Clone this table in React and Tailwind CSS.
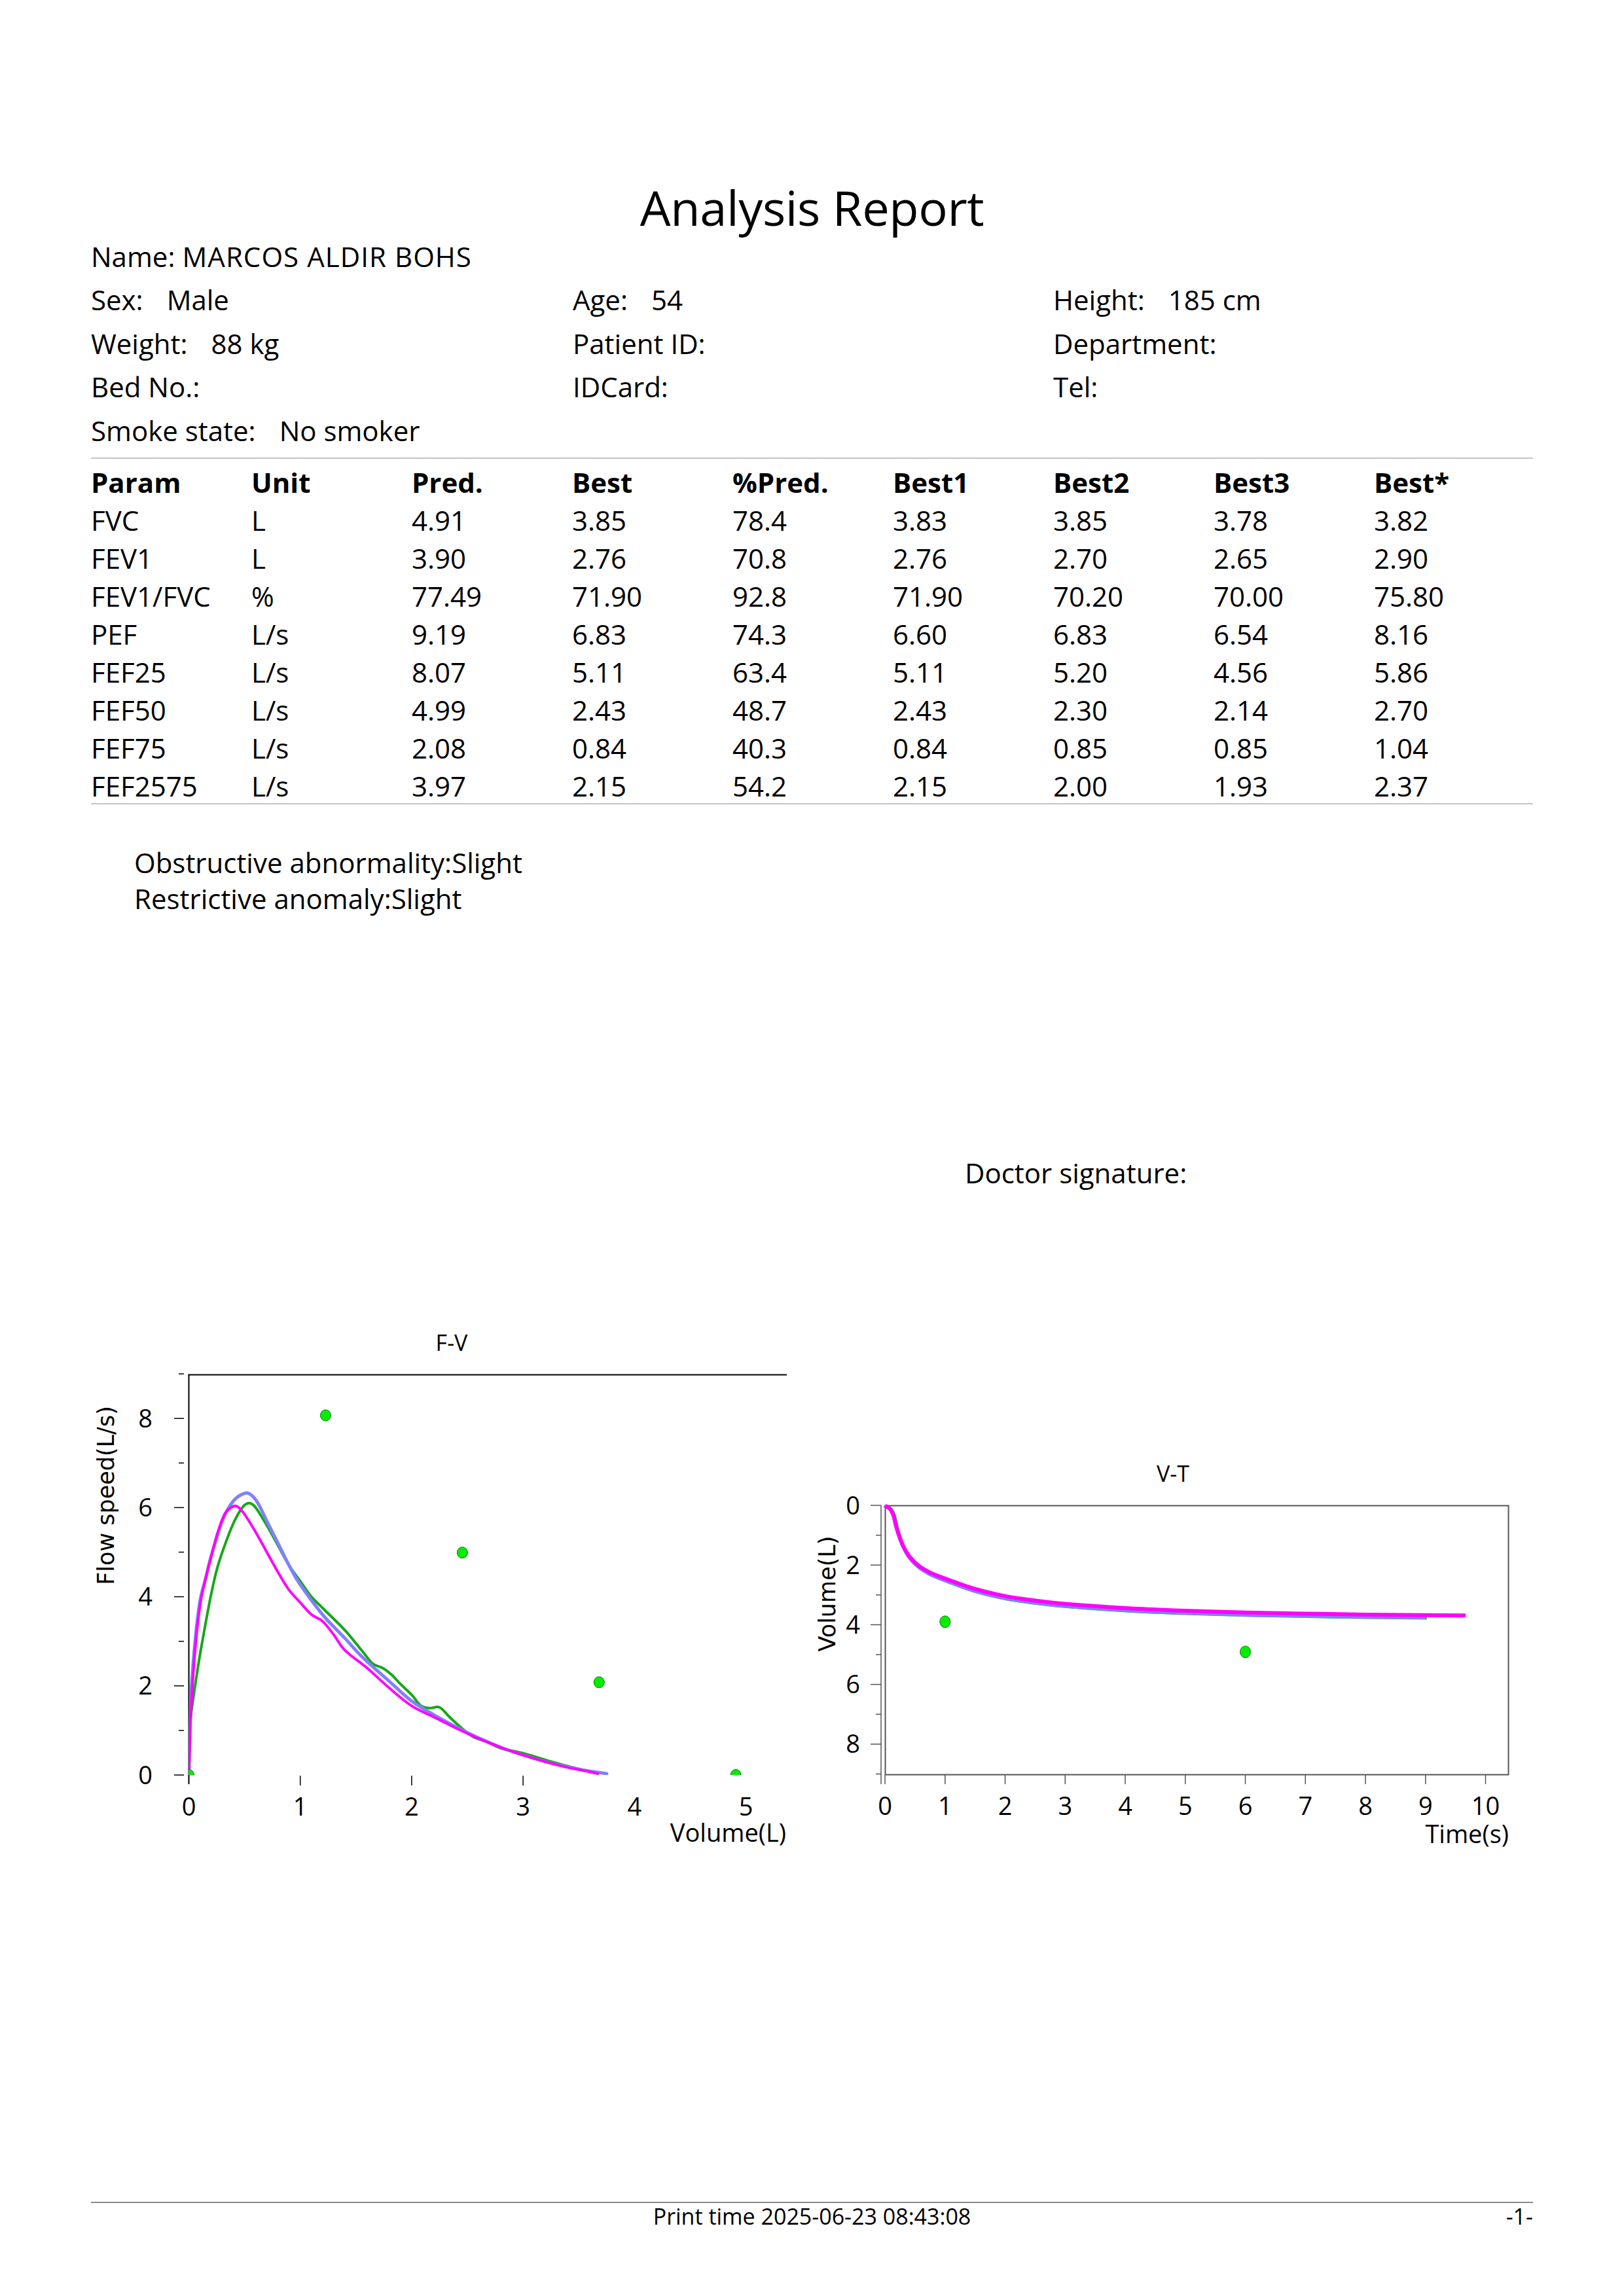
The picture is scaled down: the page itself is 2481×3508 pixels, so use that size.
import React from 'react';

const info = [
  [['Name:', 'MARCOS ALDIR BOHS', true], null, null],
  [['Sex:', 'Male'], ['Age:', '54'], ['Height:', '185 cm']],
  [['Weight:', '88 kg'], ['Patient ID:', ''], ['Department:', '']],
  [['Bed No.:', ''], ['IDCard:', ''], ['Tel:', '']],
  [['Smoke state:', 'No smoker'], null, null],
];

const head = ['Param', 'Unit', 'Pred.', 'Best', '%Pred.', 'Best1', 'Best2', 'Best3', 'Best*'];
const rows = [
  ['FVC', 'L', '4.91', '3.85', '78.4', '3.83', '3.85', '3.78', '3.82'],
  ['FEV1', 'L', '3.90', '2.76', '70.8', '2.76', '2.70', '2.65', '2.90'],
  ['FEV1/FVC', '%', '77.49', '71.90', '92.8', '71.90', '70.20', '70.00', '75.80'],
  ['PEF', 'L/s', '9.19', '6.83', '74.3', '6.60', '6.83', '6.54', '8.16'],
  ['FEF25', 'L/s', '8.07', '5.11', '63.4', '5.11', '5.20', '4.56', '5.86'],
  ['FEF50', 'L/s', '4.99', '2.43', '48.7', '2.43', '2.30', '2.14', '2.70'],
  ['FEF75', 'L/s', '2.08', '0.84', '40.3', '0.84', '0.85', '0.85', '1.04'],
  ['FEF2575', 'L/s', '3.97', '2.15', '54.2', '2.15', '2.00', '1.93', '2.37'],
];

// smooth path through points (catmull-rom -> bezier)
function smooth(pts) {
  let d = `M${pts[0][0].toFixed(1)},${pts[0][1].toFixed(1)}`;
  for (let i = 0; i < pts.length - 1; i++) {
    const p0 = pts[i - 1] || pts[i];
    const p1 = pts[i];
    const p2 = pts[i + 1];
    const p3 = pts[i + 2] || p2;
    const c1x = p1[0] + (p2[0] - p0[0]) / 6;
    const c1y = p1[1] + (p2[1] - p0[1]) / 6;
    const c2x = p2[0] - (p3[0] - p1[0]) / 6;
    const c2y = p2[1] - (p3[1] - p1[1]) / 6;
    d += ` C${c1x.toFixed(1)},${c1y.toFixed(1)} ${c2x.toFixed(1)},${c2y.toFixed(1)} ${p2[0].toFixed(1)},${p2[1].toFixed(1)}`;
  }
  return d;
}

const FONT = 'Open Sans, Noto Sans, sans-serif';
const LABEL_FONT = 'DejaVu Sans, Verdana, sans-serif';

// F-V
const fx = (v) => 288.5 + 170.2 * v;
const fy = (f) => 2713 - 68.1 * f;

const fvMagenta = [[0, 0], [0.02, 1.5], [0.06, 2.9], [0.1, 3.8], [0.14, 4.3], [0.2, 4.9], [0.26, 5.45], [0.32, 5.85], [0.38, 6.0], [0.43, 6.03], [0.5, 5.85], [0.6, 5.45], [0.7, 5.0], [0.8, 4.55], [0.9, 4.15], [1.0, 3.87], [1.1, 3.6], [1.2, 3.45], [1.3, 3.15], [1.4, 2.8], [1.6, 2.4], [1.8, 1.95], [2.0, 1.55], [2.2, 1.3], [2.4, 1.05], [2.6, 0.82], [2.8, 0.62], [3.0, 0.45], [3.2, 0.3], [3.4, 0.17], [3.6, 0.07], [3.67, 0.03]];
const fvBlue = [[0, 0], [0.02, 1.8], [0.06, 3.1], [0.1, 3.9], [0.15, 4.4], [0.2, 4.9], [0.3, 5.7], [0.4, 6.15], [0.5, 6.32], [0.56, 6.28], [0.62, 6.1], [0.7, 5.7], [0.8, 5.2], [0.9, 4.7], [1.0, 4.27], [1.2, 3.6], [1.4, 3.07], [1.56, 2.64], [1.8, 2.1], [2.0, 1.66], [2.2, 1.35], [2.5, 0.95], [2.8, 0.62], [3.0, 0.45], [3.2, 0.3], [3.5, 0.13], [3.75, 0.03]];
const fvGreen = [[0, 0], [0.01, 1.1], [0.05, 1.9], [0.1, 2.7], [0.15, 3.4], [0.2, 4.05], [0.25, 4.6], [0.31, 5.07], [0.4, 5.65], [0.48, 6.0], [0.54, 6.1], [0.6, 6.0], [0.7, 5.6], [0.8, 5.15], [0.9, 4.7], [1.0, 4.35], [1.1, 4.0], [1.22, 3.7], [1.4, 3.25], [1.55, 2.8], [1.65, 2.5], [1.74, 2.4], [1.82, 2.25], [1.9, 2.04], [2.0, 1.8], [2.08, 1.56], [2.16, 1.5], [2.25, 1.52], [2.34, 1.3], [2.45, 1.05], [2.55, 0.86], [2.68, 0.74], [2.8, 0.6], [3.0, 0.49], [3.2, 0.34], [3.4, 0.2], [3.55, 0.11], [3.68, 0.04]];
const fvDots = [[0, 0], [1.2275, 8.07], [2.455, 4.99], [3.6825, 2.08], [4.91, 0]];

// V-T
const tx = (t) => 1352 + 91.75 * t;
const ty = (v) => 2301 + 45.6 * v;

const vtBase = [[0, 0], [0.015, 0.03], [0.087, 0.125], [0.142, 0.34], [0.178, 0.64], [0.232, 1.0], [0.305, 1.37], [0.414, 1.73], [0.56, 2.02], [0.75, 2.25], [1.0, 2.45], [1.5, 2.8], [2.0, 3.04], [2.5, 3.19], [3, 3.3], [4, 3.44], [5, 3.53], [6, 3.59], [7, 3.63], [8, 3.66], [9, 3.68], [9.67, 3.69]];
const vtMagenta = vtBase;
const vtBlue = vtBase.filter((p) => p[0] <= 9.3).map(([t, v]) => [t, v + Math.min(0.08, v * 0.03)]);
const vtGreen = vtBase.filter((p) => p[0] <= 9.35).map(([t, v]) => [t + 0.02, v + Math.min(0.1, v * 0.035)]);
const vtDots = [[1, 3.9], [6, 4.91]];

function toPts(data, mx, my) {
  return data.map(([a, b]) => [mx(a), my(b)]);
}

function FVChart() {
  return (
    <svg width="1120" height="850" viewBox="100 2000 1120 850" className="block shrink-0">
      <defs>
        <clipPath id="fvclip">
          <rect x="288.5" y="2100" width="914" height="613" />
        </clipPath>
      </defs>
      <text x="690" y="2065" textAnchor="middle" fontFamily={FONT} fontSize="34">F-V</text>
      <line x1="287.5" y1="2101.5" x2="1202" y2="2101.5" stroke="#000" strokeWidth="2" />
      <line x1="288.5" y1="2101" x2="288.5" y2="2727" stroke="#000" strokeWidth="2" />
      {[0, 1, 2, 3, 4, 5, 6, 7, 8, 9].map((n) => (
        <line key={n} x1={n % 2 === 0 ? 266 : 273} y1={fy(n)} x2="281" y2={fy(n)} stroke="#000" strokeWidth="1.5" />
      ))}
      {[0, 2, 4, 6, 8].map((n) => (
        <text key={n} x="233" y={fy(n) + 13.5} textAnchor="end" fontFamily={FONT} fontSize="38">{n}</text>
      ))}
      {[1, 2, 3].map((n) => (
        <line key={n} x1={fx(n)} y1="2714" x2={fx(n)} y2="2729" stroke="#000" strokeWidth="1.5" />
      ))}
      {[0, 1, 2, 3, 4, 5].map((n) => (
        <text key={n} x={fx(n)} y="2775" textAnchor="middle" fontFamily={FONT} fontSize="38">{n}</text>
      ))}
      <text x="1201" y="2815" textAnchor="end" fontFamily={FONT} fontSize="38">Volume(L)</text>
      <text x="174" y="2286" textAnchor="middle" fontFamily={LABEL_FONT} fontSize="35" transform="rotate(-90 174 2286)">Flow speed(L/s)</text>
      <g clipPath="url(#fvclip)" fill="none" strokeLinejoin="round" strokeLinecap="round">
        <path d={smooth(toPts(fvGreen, fx, fy))} stroke="#16a816" strokeWidth="4" />
        <path d={smooth(toPts(fvBlue, fx, fy))} stroke="#8080ff" strokeWidth="5" />
        <path d={smooth(toPts(fvMagenta, fx, fy))} stroke="#ff00ff" strokeWidth="4" />
        {fvDots.map(([v, f], i) => (
          <ellipse key={i} cx={fx(v)} cy={fy(f)} rx="8" ry="8.5" fill="#00ee00" stroke="#0a7a0a" strokeWidth="1" />
        ))}
      </g>
    </svg>
  );
}

function VTChart() {
  return (
    <svg width="1120" height="850" viewBox="1220 2000 1120 850" className="block shrink-0">
      <text x="1792" y="2265" textAnchor="middle" fontFamily={FONT} fontSize="34">V-T</text>
      <rect x="1352.5" y="2301.5" width="952" height="411" fill="none" stroke="#555" strokeWidth="2" />
      <line x1="1346" y1="2301" x2="1346" y2="2727" stroke="#555" strokeWidth="1.5" />
      {[0, 1, 2, 3, 4, 5, 6, 7, 8, 9].map((n) => (
        <line key={n} x1={n % 2 === 0 ? 1330 : 1338} y1={ty(n)} x2="1346" y2={ty(n)} stroke="#555" strokeWidth="1.5" />
      ))}
      {[0, 2, 4, 6, 8].map((n) => (
        <text key={n} x="1314" y={ty(n) + 13.5} textAnchor="end" fontFamily={FONT} fontSize="38">{n}</text>
      ))}
      {[0, 1, 2, 3, 4, 5, 6, 7, 8, 9, 10].map((n) => (
        <line key={n} x1={tx(n)} y1="2713" x2={tx(n)} y2="2727" stroke="#555" strokeWidth="1.5" />
      ))}
      {[0, 1, 2, 3, 4, 5, 6, 7, 8, 9, 10].map((n) => (
        <text key={n} x={tx(n)} y="2774" textAnchor="middle" fontFamily={FONT} fontSize="38">{n}</text>
      ))}
      <text x="2305" y="2817" textAnchor="end" fontFamily={FONT} fontSize="38">Time(s)</text>
      <text x="1276" y="2436" textAnchor="middle" fontFamily={LABEL_FONT} fontSize="35" transform="rotate(-90 1276 2436)">Volume(L)</text>
      <g fill="none" strokeLinejoin="round" strokeLinecap="butt">
        <path d={smooth(toPts(vtGreen, tx, ty))} stroke="#16a816" strokeWidth="4" />
        <path d={smooth(toPts(vtBlue, tx, ty))} stroke="#8080ff" strokeWidth="5" />
        <path d={smooth(toPts(vtMagenta, tx, ty))} stroke="#ff00ff" strokeWidth="6" />
      </g>
      {vtDots.map(([t, v], i) => (
        <ellipse key={i} cx={tx(t)} cy={ty(v)} rx="8" ry="9" fill="#00ee00" stroke="#0a7a0a" strokeWidth="1" />
      ))}
    </svg>
  );
}

function Field({ cell }) {
  if (!cell) return <div />;
  const [label, value, tight] = cell;
  return (
    <div className="whitespace-nowrap">
      <span>{label}</span>
      {value && <span className={tight ? 'ml-[11px] tracking-[0.025em]' : 'ml-[36px]'}>{value}</span>}
    </div>
  );
}

export default function App() {
  return (
    <div className="w-[2481px] h-[3508px] bg-white text-black flex flex-col font-['Open_Sans','Noto_Sans',sans-serif] overflow-hidden">
      <h1 className="pt-[280px] text-center text-[74px] leading-none tracking-[-0.005em] font-normal">Analysis Report</h1>

      <div className="mt-[4px] px-[139px] text-[42px]">
        {info.map((row, i) => (
          <div key={i} className="grid grid-cols-[736px_734px_1fr] h-[66.5px] items-center">
            {row.map((cell, j) => <Field key={j} cell={cell} />)}
          </div>
        ))}

        <div className="mt-[8px] h-[2px] bg-[#c4c4c4]" />

        <div className="mt-[4px]">
          <div className="grid grid-cols-[245px_245px_245px_245px_245px_245px_245px_245px_1fr] h-[58px] items-center font-bold">
            {head.map((h) => <div key={h}>{h}</div>)}
          </div>
          {rows.map((r) => (
            <div key={r[0]} className="grid grid-cols-[245px_245px_245px_245px_245px_245px_245px_245px_1fr] h-[58px] items-center">
              {r.map((c, k) => <div key={k}>{c}</div>)}
            </div>
          ))}
        </div>
        <div className="h-[2px] bg-[#c4c4c4]" />
      </div>

      <div className="mt-[61px] pl-[205px] text-[42px] leading-[55px]">
        <div>Obstructive abnormality:Slight</div>
        <div>Restrictive anomaly:Slight</div>
      </div>

      <div className="mt-[364px] pl-[1474px] text-[42px] leading-[55px]">Doctor signature:</div>

      <div className="mt-[180px] pl-[100px] flex">
        <FVChart />
        <VTChart />
      </div>

      <div className="mt-[515px] px-[139px]">
        <div className="h-[2px] bg-[#8c8c8c]" />
        <div className="grid grid-cols-3 text-[34px] leading-[40px]">
          <div />
          <div className="text-center whitespace-nowrap">Print time 2025-06-23 08:43:08</div>
          <div className="text-right">-1-</div>
        </div>
      </div>
    </div>
  );
}
